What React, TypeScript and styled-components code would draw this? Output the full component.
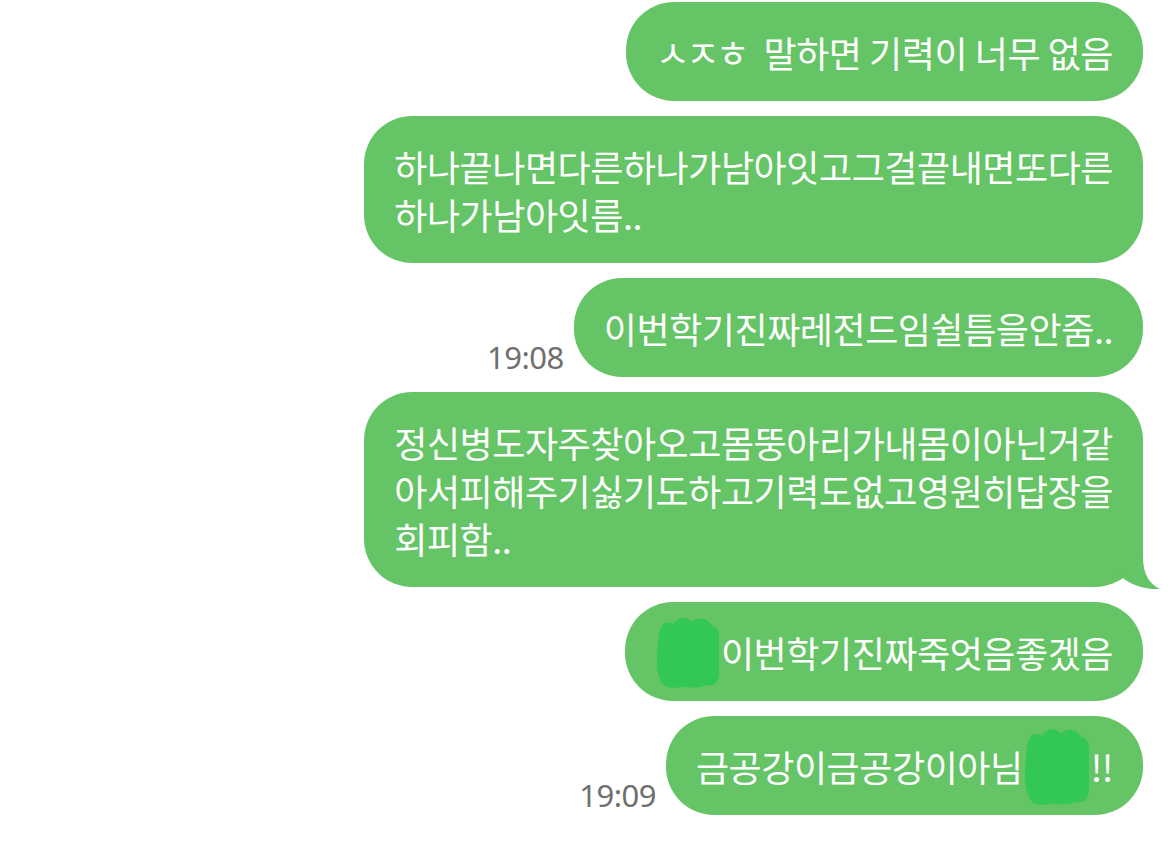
import React from 'react';
import styled, { createGlobalStyle } from 'styled-components';

// --- Global page reset ---
const GlobalStyle = createGlobalStyle`
  html, body {
    margin: 0;
    padding: 0;
    background: #ffffff;
  }
  body {
    font-family: 'Noto Sans CJK KR', 'Noto Sans', sans-serif;
  }
`;

const BUBBLE_GREEN = '#65c466';
const SCRIBBLE_GREEN = '#33c758';

// --- Styled Components ---

const Thread = styled.div`
  display: flex;
  flex-direction: column;
  gap: 15px;
  width: 1170px;
  height: 855px;
  padding: 2px 27px 0 0;
  box-sizing: border-box;
  overflow: hidden;
`;

const Row = styled.div`
  display: flex;
  justify-content: flex-end;
  align-items: flex-end;
  gap: 10px;
`;

const Time = styled.span`
  font-family: 'Noto Sans', 'Liberation Sans', sans-serif;
  font-size: 31px;
  color: #6f6f6f;
  line-height: 1;
  padding-bottom: 4px;
  letter-spacing: -0.5px;
`;

const Bubble = styled.div`
  position: relative;
  background: ${BUBBLE_GREEN};
  color: #ffffff;
  font-family: 'Noto Sans CJK KR', 'Noto Sans', sans-serif;
  font-size: 36px;
  letter-spacing: -0.45px;
  line-height: 48px;
  padding: 25.5px 30px;
  border-radius: 48px;
  white-space: nowrap;
`;

// the little ㅅㅈㅎ initials render smaller than full syllables
const Jamo = styled.span`
  font-size: 37px;
  line-height: 0;
  letter-spacing: -4px;
  margin-right: 10px;
`;

// hand-drawn marker scribble used to hide a name
const Scribble = styled.svg<{ $h: number }>`
  display: inline-block;
  vertical-align: top;
  margin: ${({ $h }) => `-${($h - 48) / 2}px 0`};
`;

const Tail = styled.svg`
  position: absolute;
  right: -17px;
  bottom: -2px;
  width: 50px;
  height: 50px;
`;

function Blot({ w, h }: { w: number; h: number }) {
  return (
    <Scribble $h={h} width={w} height={h} viewBox="0 0 68 74" preserveAspectRatio="none">
      <path
        d="M4 20 C5 9 12 5 19 9 C23 2 33 1 38 7 C44 1 54 3 58 10 C64 11 67 17 66 26 L66 58 C66 67 61 72 53 70 C45 74 35 72 27 72 C18 74 8 73 5 64 C1 55 2 40 3 30 Z"
        fill={SCRIBBLE_GREEN}
      />
    </Scribble>
  );
}

type Msg = {
  lines: React.ReactNode[];
  time?: string;
  tail?: boolean;
};

const messages: Msg[] = [
  {
    lines: [
      <>
        <Jamo>ㅅㅈㅎ</Jamo> 말하면 기력이 너무 없음
      </>,
    ],
  },
  {
    lines: ['하나끝나면다른하나가남아잇고그걸끝내면또다른', '하나가남아잇름..'],
  },
  { lines: ['이번학기진짜레전드임쉴틈을안줌..'], time: '19:08' },
  {
    lines: [
      '정신병도자주찾아오고몸뚱아리가내몸이아닌거같',
      '아서피해주기싫기도하고기력도없고영원히답장을',
      '회피함..',
    ],
    tail: true,
  },
  {
    lines: [
      <>
        <Blot w={66} h={74} />
        이번학기진짜죽엇음좋겠음
      </>,
    ],
  },
  {
    lines: [
      <>
        금공강이금공강이아님
        <Blot w={68} h={80} />
        !!
      </>,
    ],
    time: '19:09',
  },
];

export default function App() {
  return (
    <>
      <GlobalStyle />
      <Thread>
        {messages.map((m, i) => (
          <Row key={i}>
            {m.time && <Time>{m.time}</Time>}
            <Bubble>
              {m.lines.map((line, j) => (
                <React.Fragment key={j}>
                  {j > 0 && <br />}
                  {line}
                </React.Fragment>
              ))}
              {m.tail && (
                <Tail viewBox="0 0 50 50">
                  <path
                    d="M33 0 V18 C33 36 40 45 50 50 C38 51 22 47 13 39 L0 30 L0 0 Z"
                    fill={BUBBLE_GREEN}
                  />
                </Tail>
              )}
            </Bubble>
          </Row>
        ))}
      </Thread>
    </>
  );
}
